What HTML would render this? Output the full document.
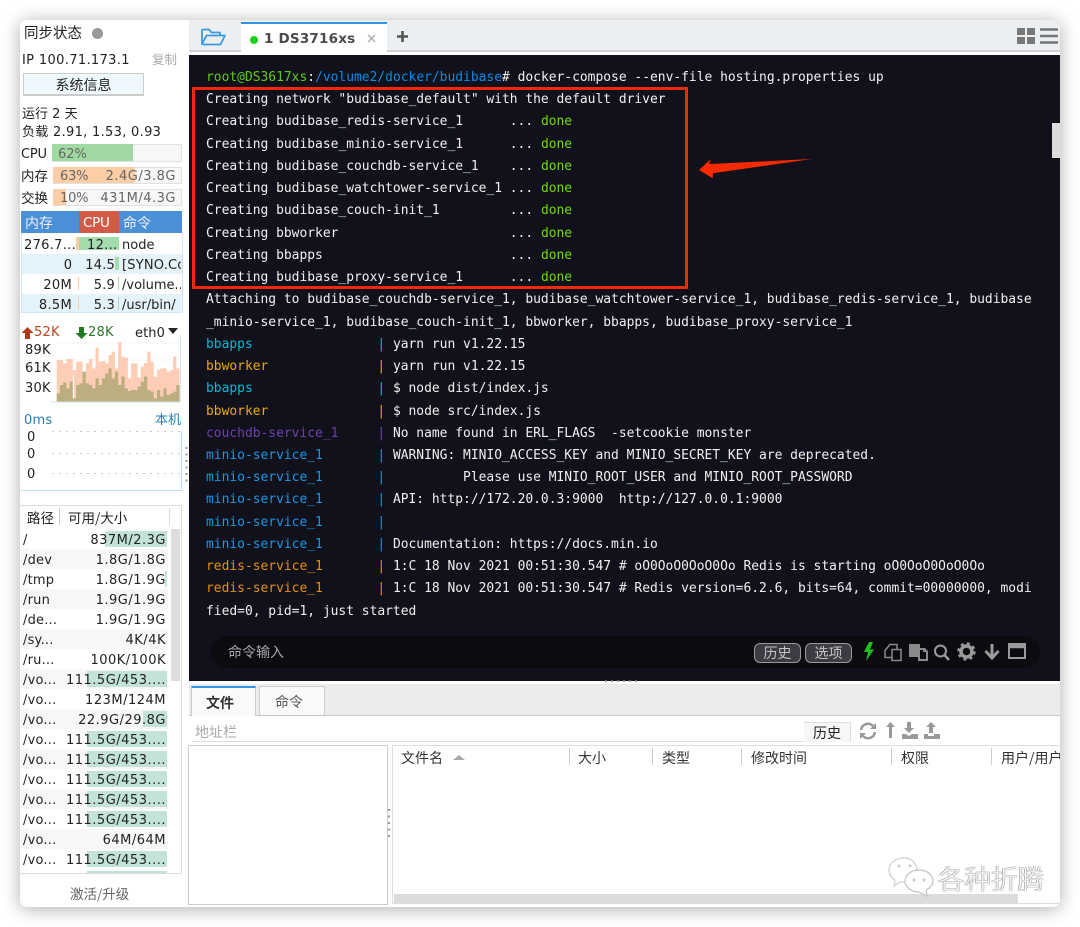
<!DOCTYPE html>
<html><head><meta charset="utf-8">
<style>
html,body{margin:0;padding:0;background:#fff}
#r{position:relative;width:1080px;height:927px;overflow:hidden;background:#fff;filter:blur(.3px);font-family:"DejaVu Sans","Noto Sans CJK SC",sans-serif;font-size:13px;color:#222}
#w{position:absolute;left:20px;top:20px;width:1040px;height:887px;border-radius:7px;background:#fff;box-shadow:0 2px 18px rgba(0,0,0,.32)}
.a{position:absolute}
.t{position:absolute;white-space:nowrap;line-height:20px;height:20px}
.c{font-family:"Noto Sans CJK SC","DejaVu Sans",sans-serif}
.d{position:absolute;left:21px;width:147px;height:20px}
.d .p{position:absolute;left:2px;top:2px;line-height:20px;font-size:13px;letter-spacing:.2px}
.d .s{position:absolute;right:2px;top:2px;line-height:20px;white-space:nowrap;letter-spacing:.5px}
.d .b{position:absolute;right:1px;top:2px;height:16px;background:#c3e3da}
.alt{background:#f7f7f7}
pre{position:absolute;left:206px;top:67px;margin:0;font-family:"DejaVu Sans Mono",monospace;font-size:12.95px;line-height:22.24px;color:#f0f0f0}
.g{color:#6fdc00}.gr{color:#62cc10}.bl{color:#0a8ce8}.cy{color:#00bcd8}.or{color:#f0a800}.pu{color:#7040b0}.mi{color:#1a96e4}.re{color:#e8900a}
.hd{position:absolute;top:749px;height:18px;line-height:18px;font-size:14px;white-space:nowrap;font-family:"Noto Sans CJK SC",sans-serif;color:#333}
.sp{position:absolute;top:748px;width:1px;height:17px;background:#ccc}
.btn{position:absolute;top:643px;width:45px;height:18px;border:1px solid #999;border-radius:6px;background:#3c3d44;color:#c4c4c4;font-size:14px;line-height:19px;text-align:center;font-family:"Noto Sans CJK SC",sans-serif}
.tr{position:absolute;left:21px;width:161px;height:20px}
</style></head><body><div id="r">
<div id="w"></div>

<!-- sidebar top -->
<div class="t c" style="left:24px;top:23px;font-size:14.5px">同步状态</div>
<div class="a" style="left:92px;top:28px;width:11px;height:11px;border-radius:50%;background:#999"></div>
<div class="t" style="left:22px;top:51px;letter-spacing:.35px">IP 100.71.173.1</div>
<div class="t c" style="left:152px;top:49px;color:#aaa;font-size:12.5px">复制</div>
<div class="a c" style="left:23px;top:73px;width:119px;height:20px;border:1px solid #ccc;border-bottom-width:2px;background:#eef8fd;text-align:center;line-height:22px;font-size:14px">系统信息</div>
<div class="t" style="left:22px;top:103px"><span class="c">运行</span> 2 <span class="c">天</span></div>
<div class="t" style="left:22px;top:121px;letter-spacing:.3px"><span class="c">负载</span> 2.91, 1.53, 0.93</div>

<div class="t" style="left:21px;top:145px;letter-spacing:-.2px">CPU</div>
<div class="a" style="left:52px;top:144px;width:128px;height:16px;border:1px solid #e2e2e2;background:#f7f7f7"></div>
<div class="a" style="left:52px;top:144px;width:81px;height:17px;background:#a0d9a2"></div>
<div class="t" style="left:58px;top:145px;color:#666">62%</div>

<div class="t c" style="left:21px;top:165px;font-size:13.5px">内存</div>
<div class="a" style="left:53px;top:167px;width:127px;height:15px;border:1px solid #e2e2e2;background:#f7f7f7"></div>
<div class="a" style="left:53px;top:167px;width:82px;height:16px;background:#fdcda5"></div>
<div class="t" style="left:60px;top:167px;color:#666;letter-spacing:-.2px">63%</div>
<div class="t" style="right:904px;top:167px;color:#666;letter-spacing:.5px">2.4G/3.8G</div>

<div class="t c" style="left:21px;top:187px;font-size:13.5px">交换</div>
<div class="a" style="left:53px;top:189px;width:127px;height:15px;border:1px solid #e2e2e2;background:#f7f7f7"></div>
<div class="a" style="left:53px;top:189px;width:13px;height:16px;background:#fdcda5"></div>
<div class="t" style="left:60px;top:189px;color:#666;letter-spacing:-.2px">10%</div>
<div class="t" style="right:904px;top:189px;color:#666;letter-spacing:.5px">431M/4.3G</div>

<!-- process table -->
<div class="a" style="left:21px;top:211px;width:161px;height:22px;background:#4a90d6"></div>
<div class="a" style="left:79px;top:211px;width:40px;height:22px;background:#d25b47"></div>
<div class="t c" style="left:25px;top:213px;color:#eef;font-size:14px">内存</div>
<div class="t" style="left:83px;top:213px;color:#fff;font-size:13.5px;letter-spacing:-.3px">CPU</div>
<div class="t c" style="left:123px;top:213px;color:#eef;font-size:14px">命令</div>
<div class="a" style="left:21px;top:233px;width:160px;height:79px;border:1px solid #cfe7f5;border-top:0"></div>
<div class="tr" style="top:254px;background:#e4f2f9;width:160px;left:22px"></div>
<div class="tr" style="top:294px;background:#e4f2f9;width:160px;left:22px;height:18px"></div>
<div class="a" style="left:76px;top:237px;width:3px;height:13px;background:#fdcda5"></div>
<div class="a" style="left:79px;top:237px;width:40px;height:13px;background:#a5dcae"></div>
<div class="a" style="left:115px;top:257px;width:4px;height:13px;background:#a5dcae"></div>
<div class="a" style="left:78px;top:277px;width:1px;height:13px;background:#fdcda5"></div>
<div class="a" style="left:118px;top:277px;width:1px;height:13px;background:#a5dcae"></div>
<div class="a" style="left:78px;top:297px;width:1px;height:13px;background:#fdcda5"></div>
<div class="a" style="left:118px;top:297px;width:1px;height:13px;background:#a5dcae"></div>
<div class="t" style="left:24px;top:236px;letter-spacing:.3px">276.7...</div>
<div class="t" style="left:87px;top:236px;letter-spacing:.3px">12...</div>
<div class="t" style="left:122px;top:236px">node</div>
<div class="t" style="right:1008px;top:256px">0</div>
<div class="t" style="right:965px;top:256px;letter-spacing:.2px">14.5</div>
<div class="a" style="left:122px;top:256px;width:59px;height:20px;overflow:hidden;line-height:20px;white-space:nowrap;letter-spacing:.2px">[SYNO.Co</div>
<div class="t" style="right:1008px;top:276px;letter-spacing:.3px">20M</div>
<div class="t" style="right:965px;top:276px;letter-spacing:.2px">5.9</div>
<div class="a" style="left:122px;top:276px;width:59px;height:20px;overflow:hidden;line-height:20px;white-space:nowrap">/volume..</div>
<div class="t" style="right:1008px;top:296px;letter-spacing:.3px">8.5M</div>
<div class="t" style="right:965px;top:296px;letter-spacing:.2px">5.3</div>
<div class="t" style="left:122px;top:296px">/usr/bin/</div>

<!-- net -->
<svg class="a" style="left:21px;top:326px" width="13" height="14" viewBox="0 0 13 14"><path d="M6.500 1L12.500 7H9V13H4V7H.5Z" fill="#b23a1c"/></svg>
<div class="t" style="left:34px;top:323px;color:#b8441f;letter-spacing:.2px">52K</div>
<svg class="a" style="left:75px;top:326px" width="13" height="14" viewBox="0 0 13 14"><path d="M4 1H9V7H12.500L6.500 13L.5 7H4Z" fill="#1f7a1f"/></svg>
<div class="t" style="left:88px;top:323px;color:#2a7a2a;letter-spacing:.2px">28K</div>
<div class="t" style="left:135px;top:324px;letter-spacing:.1px">eth0</div>
<div class="a" style="left:168px;top:328px;width:0;height:0;border-left:5px solid transparent;border-right:5px solid transparent;border-top:6px solid #222"></div>
<div class="t" style="left:25px;top:341px;letter-spacing:.2px">89K</div>
<div class="t" style="left:25px;top:359px;letter-spacing:.2px">61K</div>
<div class="t" style="left:25px;top:379px;letter-spacing:.2px">30K</div>
<svg class="a" style="left:50px;top:335px" width="140" height="75" viewBox="0 0 420 225">
<path d="M22 24H390M22 75H390M22 140H390" stroke="#ccc" stroke-width="2" stroke-dasharray="3 9" fill="none"/>
<g fill="none" stroke-width="9.7">
<path stroke="#fdcdb6" d="M25 75V200M34.700 75V200M44.400 85V200M54.100 72V200M63.800 72V200M73.500 105V200M83.200 80V200M92.900 80V200M102.600 120V200M112.300 85V200M122 72V200M131.700 100V200M141.400 38V200M151.100 80V200M160.800 78V200M170.500 85V200M180.200 60V200M189.900 50V200M199.600 100V200M209.300 22V200M219 65V200M228.700 68V200M238.400 130V200M248.100 85V200M257.800 85V200M267.500 128V200M277.200 95V200M286.900 85V200M296.600 50V200M306.300 80V200M316 125V200M325.700 105V200M335.400 100V200M345.100 100V200M354.800 110V200M364.500 105V200M374.200 65V200M383.900 100V200"/>
<path stroke="#bdae80" d="M25 175V200M34.700 150V200M44.400 142V200M54.100 160V200M63.800 140V200M73.500 190V200M83.200 150V200M92.900 145V200M102.600 110V200M112.300 145V200M122 150V200M131.700 160V200M141.400 130V200M151.100 150V200M160.800 130V200M170.500 115V200M180.200 100V200M189.900 130V200M199.600 110V200M209.300 150V200M219 125V200M228.700 160V200M238.400 168V200M248.100 165V200M257.800 165V200M267.500 155V200M277.200 140V200M286.900 125V200M296.600 165V200M306.300 170V200M316 190V200M325.700 165V200M335.400 185V200M345.100 160V200M354.800 180V200M364.500 175V200M374.200 170V200M383.900 150V200"/>
</g>
<path d="M70 120V190" stroke="#fff" stroke-width="3"/>
<path d="M0 201H391V0" stroke="#bcdcec" stroke-width="2" fill="none"/>
</svg>

<!-- latency -->
<div class="t" style="left:24px;top:411px;color:#2b7cb3;letter-spacing:.2px">0ms</div>
<div class="t c" style="left:155px;top:409px;color:#2b7cb3;font-size:13px">本机</div>
<div class="t" style="left:27px;top:428px">0</div>
<div class="t" style="left:27px;top:445px">0</div>
<div class="t" style="left:27px;top:465px">0</div>
<svg class="a" style="left:20px;top:428px" width="166" height="66"><path d="M32 3.500H160M32 25.500H160M32 45.500H160" stroke="#ccc" stroke-dasharray="2 5" fill="none"/><path d="M1 62.500H161.500V3" stroke="#bcdcec" fill="none"/></svg>
<svg class="a" style="left:184px;top:445px" width="5" height="40"><path d="M2.500 2V38" stroke="#999" stroke-width="2" stroke-dasharray="2 4.500"/></svg>

<!-- disk table -->
<div class="a" style="left:20px;top:505px;width:161px;height:367px;border-top:1px solid #ddd;border-right:1px solid #ddd;border-bottom:1px solid #ddd"></div>
<div class="t c" style="left:27px;top:507px;font-size:13.5px">路径</div>
<div class="a" style="left:59px;top:508px;width:1px;height:17px;background:#ccc"></div>
<div class="t c" style="left:68px;top:507px;font-size:13.5px">可用/大小</div>
<div class="a" style="left:169px;top:508px;width:1px;height:17px;background:#ddd"></div>
<div class="a" style="left:171px;top:529px;width:9px;height:152px;background:#ddd"></div>

<div class="d" style="top:529px"><div class="b" style="width:62px"></div><div class="p">/</div><div class="s">837M/2.3G</div></div>
<div class="d alt" style="top:549px"><div class="p">/dev</div><div class="s">1.8G/1.8G</div></div>
<div class="d" style="top:569px"><div class="b" style="width:2px"></div><div class="p">/tmp</div><div class="s">1.8G/1.9G</div></div>
<div class="d alt" style="top:589px"><div class="p">/run</div><div class="s">1.9G/1.9G</div></div>
<div class="d" style="top:609px"><div class="p">/de...</div><div class="s">1.9G/1.9G</div></div>
<div class="d alt" style="top:629px"><div class="p">/sy...</div><div class="s">4K/4K</div></div>
<div class="d" style="top:649px"><div class="p">/ru...</div><div class="s">100K/100K</div></div>
<div class="d alt" style="top:669px"><div class="b" style="width:80px"></div><div class="p">/vo...</div><div class="s">111.5G/453....</div></div>
<div class="d" style="top:689px"><div class="p">/vo...</div><div class="s">123M/124M</div></div>
<div class="d alt" style="top:709px"><div class="b" style="width:24px"></div><div class="p">/vo...</div><div class="s">22.9G/29.8G</div></div>
<div class="d" style="top:729px"><div class="b" style="width:80px"></div><div class="p">/vo...</div><div class="s">111.5G/453....</div></div>
<div class="d alt" style="top:749px"><div class="b" style="width:80px"></div><div class="p">/vo...</div><div class="s">111.5G/453....</div></div>
<div class="d" style="top:769px"><div class="b" style="width:80px"></div><div class="p">/vo...</div><div class="s">111.5G/453....</div></div>
<div class="d alt" style="top:789px"><div class="b" style="width:80px"></div><div class="p">/vo...</div><div class="s">111.5G/453....</div></div>
<div class="d" style="top:809px"><div class="b" style="width:80px"></div><div class="p">/vo...</div><div class="s">111.5G/453....</div></div>
<div class="d alt" style="top:829px"><div class="p">/vo...</div><div class="s">64M/64M</div></div>
<div class="d" style="top:849px"><div class="b" style="width:80px"></div><div class="p">/vo...</div><div class="s">111.5G/453....</div></div>
<div class="a" style="left:87px;top:871px;width:80px;height:2px;background:#c3e3da"></div>
<div class="t c" style="left:70px;top:883px;color:#666;font-size:13.500px">激活/升级</div>

<!-- top bar -->
<div class="a" style="left:189px;top:20px;width:871px;height:30px;background:#ebeff2;border-top-right-radius:7px"></div>
<div class="a" style="left:189px;top:50px;width:871px;height:2px;background:#d2d2d2"></div>
<svg class="a" style="left:200px;top:27px" width="27" height="20" viewBox="0 0 27 20"><path d="M2 17V3.500Q2 2.500 3 2.500H9L11.500 5.500H20V8M2 17L6.500 8.500H25L20.500 17.500H3Z" fill="none" stroke="#3a9be0" stroke-width="1.800" stroke-linejoin="round"/></svg>
<div class="a" style="left:241px;top:22px;width:146px;height:30px;background:#fff;border-top:2px solid #2f95ea;box-sizing:border-box"></div>
<div class="a" style="left:250px;top:36px;width:8px;height:8px;border-radius:50%;background:#1fcf1f"></div>
<div class="t" style="left:264px;top:29px;font-weight:bold;font-size:13.500px;color:#4a4a4a;letter-spacing:.2px;font-family:'DejaVu Sans',sans-serif">1 DS3716xs</div>
<svg class="a" style="left:366px;top:33px" width="11" height="11"><path d="M2 2L9 9M9 2L2 9" stroke="#aaa" stroke-width="1.300"/></svg>
<svg class="a" style="left:396px;top:30px" width="13" height="13"><path d="M6.500 1V12M1 6.500H12" stroke="#555" stroke-width="2.600"/></svg>
<svg class="a" style="left:1016px;top:27px" width="44" height="18"><path d="M1 1H9V8H1ZM11 1H19V8H11ZM1 10H9V17H1ZM11 10H19V17H11Z" fill="#777"/><path d="M24 2.500H42M24 9H42M24 15.500H42" stroke="#777" stroke-width="2.500"/></svg>

<!-- terminal -->
<div class="a" style="left:189px;top:55px;width:871px;height:626px;background:#10111a"></div>
<div class="a" style="left:1052px;top:123px;width:8px;height:35px;background:#dcdcdc"></div>
<pre><span class="gr">root@DS3617xs</span>:<span class="bl">/volume2/docker/budibase</span># docker-compose --env-file hosting.properties up
Creating network "budibase_default" with the default driver
Creating budibase_redis-service_1      ... <span class="g">done</span>
Creating budibase_minio-service_1      ... <span class="g">done</span>
Creating budibase_couchdb-service_1    ... <span class="g">done</span>
Creating budibase_watchtower-service_1 ... <span class="g">done</span>
Creating budibase_couch-init_1         ... <span class="g">done</span>
Creating bbworker                      ... <span class="g">done</span>
Creating bbapps                        ... <span class="g">done</span>
Creating budibase_proxy-service_1      ... <span class="g">done</span>
Attaching to budibase_couchdb-service_1, budibase_watchtower-service_1, budibase_redis-service_1, budibase
_minio-service_1, budibase_couch-init_1, bbworker, bbapps, budibase_proxy-service_1
<span class="cy">bbapps                |</span> yarn run v1.22.15
<span class="or">bbworker              |</span> yarn run v1.22.15
<span class="cy">bbapps                |</span> $ node dist/index.js
<span class="or">bbworker              |</span> $ node src/index.js
<span class="pu">couchdb-service_1     |</span> No name found in ERL_FLAGS  -setcookie monster
<span class="mi">minio-service_1       |</span> WARNING: MINIO_ACCESS_KEY and MINIO_SECRET_KEY are deprecated.
<span class="mi">minio-service_1       |</span>          Please use MINIO_ROOT_USER and MINIO_ROOT_PASSWORD
<span class="mi">minio-service_1       |</span> API: http://172.20.0.3:9000  http://127.0.0.1:9000
<span class="mi">minio-service_1       |</span>
<span class="mi">minio-service_1       |</span> Documentation: https://docs.min.io
<span class="re">redis-service_1       |</span> 1:C 18 Nov 2021 00:51:30.547 # oO0OoO0OoO0Oo Redis is starting oO0OoO0OoO0Oo
<span class="re">redis-service_1       |</span> 1:C 18 Nov 2021 00:51:30.547 # Redis version=6.2.6, bits=64, commit=00000000, modi
fied=0, pid=1, just started</pre>
<div class="a" style="left:192px;top:87px;width:490px;height:196px;border:3px solid #ee2a08"></div>
<svg class="a" style="left:690px;top:150px" width="130" height="35"><path d="M9 20L20.700 9.300L19.300 14L121.700 9L23 23.300L22.700 28.300Z" fill="#fa2a00"/></svg>

<!-- command bar -->
<div class="a" style="left:211px;top:636px;width:829px;height:32px;border-radius:16px;background:#0b0b10"></div>
<div class="t c" style="left:228px;top:642px;color:#a8a8a8;font-size:14px">命令输入</div>
<div class="btn" style="left:754px">历史</div>
<div class="btn" style="left:805px">选项</div>
<svg class="a" style="left:860px;top:640px" width="170" height="24" viewBox="0 0 170 24">
<path d="M9 2L4 12H8L6 21L14 9.500H10L13 2Z" fill="#1fc01f"/>
<g fill="none" stroke="#8a8a8a" stroke-width="1.500"><path d="M25 10.500L30 4.500H37V9M32 17.500H25V10.500"/><path d="M32 9.500H41V20.500H32Z"/></g>
<path d="M49 4H60V8H65L68 11V21H58V17H49ZM60 10V19H66V12H63V10Z" fill="#8a8a8a"/>
<circle cx="80.500" cy="11" r="5.500" fill="none" stroke="#9a9a9a" stroke-width="2"/><path d="M84.500 15L89 20" stroke="#9a9a9a" stroke-width="2.500"/>
<circle cx="106.500" cy="11.500" r="5.500" fill="none" stroke="#9a9a9a" stroke-width="3.500"/><circle cx="106.500" cy="11.500" r="8" fill="none" stroke="#9a9a9a" stroke-width="2.500" stroke-dasharray="3 3.300"/>
<path d="M132 4V17M125.500 11L132 18L138.500 11" fill="none" stroke="#9a9a9a" stroke-width="3"/>
<path d="M149 4H165V18H149Z" fill="none" stroke="#9a9a9a" stroke-width="2"/><path d="M149 6.500H165" stroke="#9a9a9a" stroke-width="3.500"/>
</svg>

<!-- split -->
<svg class="a" style="left:605px;top:679px" width="38" height="4"><path d="M0 2H36" stroke="#888" stroke-width="1.500" stroke-dasharray="2 4"/></svg>
<div class="a" style="left:189px;top:684px;width:871px;height:31px;background:#ececec"></div>
<div class="a" style="left:189px;top:715px;width:871px;height:1px;background:#c8c8c8"></div>
<div class="a" style="left:191px;top:686px;width:65px;height:30px;background:#fafafa;border-top:2px solid #2f95ea;box-sizing:border-box;border-right:1px solid #ccc;border-left:1px solid #ccc"></div>
<div class="t c" style="left:206px;top:693px;font-weight:bold;font-size:14px;color:#333">文件</div>
<div class="a" style="left:259px;top:686px;width:66px;height:29px;background:#fafafa;border:1px solid #ccc;border-bottom:0;box-sizing:border-box"></div>
<div class="t c" style="left:275px;top:692px;font-size:14px;color:#555">命令</div>

<div class="t c" style="left:195px;top:722px;color:#aaa;font-size:14px">地址栏</div>
<div class="a" style="left:192px;top:741px;width:612px;height:1px;background:#ddd"></div>
<div class="a c" style="left:804px;top:722px;width:46px;height:19px;background:#f7f7f7;border-top:1px solid #ddd;border-right:1px solid #ddd;text-align:center;font-size:14px;line-height:21px">历史</div>
<svg class="a" style="left:858px;top:720px" width="85" height="22" viewBox="0 0 85 22">
<path d="M3 10A7 7 0 0 1 15 6M17 12A7 7 0 0 1 5 16" fill="none" stroke="#999" stroke-width="2.500"/><path d="M12 9H18V3ZM8 13H2V19Z" fill="#999"/>
<path d="M31 18H34V7H37L32.500 2L28 7H31Z" fill="#999" transform="translate(0,0)"/>
<path d="M49 2H53V8H56L51 13L46 8H49ZM44 14H48L51 16L54 14H60V19H44Z" fill="#999"/>
<path d="M71 13H75V7H78L73 2L68 7H71ZM66 14H70V16H76V14H82V19H66Z" fill="#999"/>
</svg>

<!-- file panes -->
<div class="a" style="left:188px;top:745px;width:198px;height:158px;border:1px solid #ccc"></div>
<div class="a" style="left:392px;top:745px;width:668px;height:159px;border-top:1px solid #ddd;border-left:1px solid #ddd;border-bottom:1px solid #ddd;box-sizing:border-box"></div>
<svg class="a" style="left:387px;top:808px" width="4" height="34"><path d="M2 1V33" stroke="#999" stroke-width="2" stroke-dasharray="2 4.500"/></svg>
<div class="hd" style="left:401px">文件名</div>
<div class="a" style="left:453px;top:755px;width:0;height:0;border-left:6px solid transparent;border-right:6px solid transparent;border-bottom:5px solid #aaa"></div>
<div class="sp" style="left:569px"></div><div class="hd" style="left:578px">大小</div>
<div class="sp" style="left:652px"></div><div class="hd" style="left:662px">类型</div>
<div class="sp" style="left:741px"></div><div class="hd" style="left:751px">修改时间</div>
<div class="sp" style="left:891px"></div><div class="hd" style="left:901px">权限</div>
<div class="sp" style="left:991px"></div>
<div class="a" style="left:1001px;top:749px;width:59px;height:18px;overflow:hidden;line-height:18px;font-size:14px;white-space:nowrap;font-family:'Noto Sans CJK SC',sans-serif;color:#333">用户/用户组</div>
<div class="a" style="left:394px;top:894px;width:624px;height:9px;background:#dcdcdc"></div>

<!-- watermark -->
<svg class="a" style="left:886px;top:856px" width="52" height="42" viewBox="0 0 52 42">
<path d="M18 2C9 2 3 8 3 14C3 19 6 22 9 24L8 30L14 26L22 26C30 24 32 18 31 12C29 6 25 2 18 2Z" fill="#fff" stroke="#d0d0d0" stroke-width="1.200"/>
<path d="M33 14C25 14 19 19 19 25C19 31 25 36 33 36L41 40L40 34C44 32 47 29 47 25C47 19 41 14 33 14Z" fill="#fff" stroke="#c4c4c4" stroke-width="1.200"/>
<circle cx="13" cy="10" r="1.500" fill="#ccc"/><circle cx="24" cy="10" r="1.500" fill="#ccc"/><circle cx="28" cy="24" r="1.500" fill="#ccc"/><circle cx="38" cy="24" r="1.500" fill="#ccc"/>
</svg>
<div class="t c" style="left:938px;top:863px;height:30px;line-height:30px;font-size:26.500px;color:#fbfbfb;font-weight:300;text-shadow:-.7px -.7px 0 #aaa,.7px .7px 0 #bbb,.7px -.7px 0 #ccc,-.7px .7px 0 #ccc">各种折腾</div>
</div></body></html>
